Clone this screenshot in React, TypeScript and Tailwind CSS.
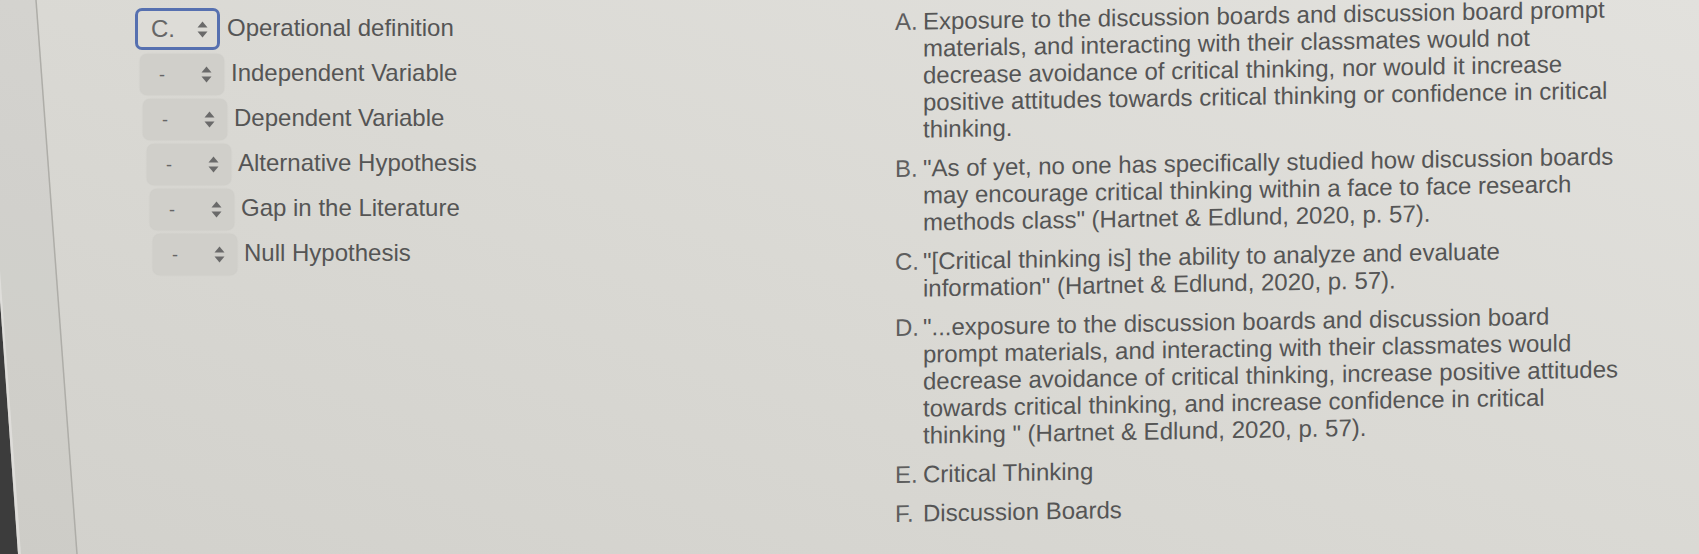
import React from 'react';

type MatchRow = {
  value: string;
  label: string;
  selected?: boolean;
  indent: string;
};

const rows: MatchRow[] = [
  { value: 'C.', label: 'Operational definition', selected: true, indent: 'ml-0' },
  { value: '-', label: 'Independent Variable', indent: 'ml-[5px]' },
  { value: '-', label: 'Dependent Variable', indent: 'ml-[8px]' },
  { value: '-', label: 'Alternative Hypothesis', indent: 'ml-[12px]' },
  { value: '-', label: 'Gap in the Literature', indent: 'ml-[15px]' },
  { value: '-', label: 'Null Hypothesis', indent: 'ml-[18px]' },
];

const answers = [
  {
    letter: 'A.',
    text: 'Exposure to the discussion boards and discussion board prompt materials, and interacting with their classmates would not decrease avoidance of critical thinking, nor would it increase positive attitudes towards critical thinking or confidence in critical thinking.',
  },
  {
    letter: 'B.',
    text: '"As of yet, no one has specifically studied how discussion boards may encourage critical thinking within a face to face research methods class" (Hartnet & Edlund, 2020, p. 57).',
  },
  {
    letter: 'C.',
    text: '"[Critical thinking is] the ability to analyze and evaluate information" (Hartnet & Edlund, 2020, p. 57).',
  },
  {
    letter: 'D.',
    text: '"...exposure to the discussion boards and discussion board prompt materials, and interacting with their classmates would decrease avoidance of critical thinking, increase positive attitudes towards critical thinking, and increase confidence in critical thinking " (Hartnet & Edlund, 2020, p. 57).',
  },
  { letter: 'E.', text: 'Critical Thinking' },
  { letter: 'F.', text: 'Discussion Boards' },
];

const UpDownIcon: React.FC<{ className?: string }> = ({ className }) => (
  <svg width="11" height="17" viewBox="0 0 11 17" className={className}>
    <path d="M5.5 0.5 L10.5 6.5 L0.5 6.5 Z" fill="#6a6a6a" strokeLinejoin="round" />
    <path d="M0.5 10.5 L10.5 10.5 L5.5 16.5 Z" fill="#6a6a6a" strokeLinejoin="round" />
  </svg>
);

const SelectBox: React.FC<{ value: string; selected?: boolean }> = ({ value, selected }) => {
  if (selected) {
    return (
      <div className="flex h-[42px] w-[85px] shrink-0 items-center justify-between rounded-[7px] border-[3px] border-[#5670b0] bg-[#dddcd7] pl-[13px] pr-[9px]">
        <span className="text-[24px] leading-none text-[#666666]">{value}</span>
        <UpDownIcon />
      </div>
    );
  }
  return (
    <div className="flex h-[41px] w-[84px] shrink-0 items-center justify-between rounded-[7px] bg-[#d0cfca] pl-[19px] pr-[12px] shadow-[0_0_2px_rgba(0,0,0,0.08)]">
      <span className="text-[18px] leading-none text-[#666666]">{value}</span>
      <UpDownIcon />
    </div>
  );
};

export default function App() {
  return (
    <div className="relative h-[554px] w-full overflow-hidden bg-linear-to-bl from-[#e2e1dd] via-[#dad9d4] to-[#d2d1cc] font-['Liberation_Sans',Arial,sans-serif] text-[#555555]">
      <svg
        className="pointer-events-none absolute inset-0"
        width="1699"
        height="554"
        viewBox="0 0 1699 554"
      >
        <path d="M0 0 L36 0 L77 554 L0 554 Z" fill="#000000" opacity="0.025" />
        <line x1="36" y1="0" x2="77" y2="554" stroke="#aeada8" strokeWidth="1.5" />
        <path d="M0 300 L18 554 L0 554 Z" fill="#3c3c3c" />
        <path d="M0 300 L18 554 L21 554 L0 270 Z" fill="#e4e3df" opacity="0.7" />
      </svg>

      <div className="relative flex">
        <div className="flex w-[895px] shrink-0 flex-col gap-[4px] pl-[135px] pt-[8px]">
          {rows.map((row) => (
            <div key={row.label} className={`flex items-center gap-[7px] ${row.indent}`}>
              <SelectBox value={row.value} selected={row.selected} />
              <span className="-mt-[3px] text-[24px] leading-none whitespace-nowrap">{row.label}</span>
            </div>
          ))}
        </div>

        <div className="w-[728px] shrink-0 origin-top-left -skew-y-1 pt-[8px] text-[24px] leading-[27px]">
          {answers.map((a) => (
            <div key={a.letter} className="mb-[12px] flex">
              <span className="w-[28px] shrink-0 text-[#5e5e5e]">{a.letter}</span>
              <p className="w-[700px]">{a.text}</p>
            </div>
          ))}
        </div>
      </div>
    </div>
  );
}
